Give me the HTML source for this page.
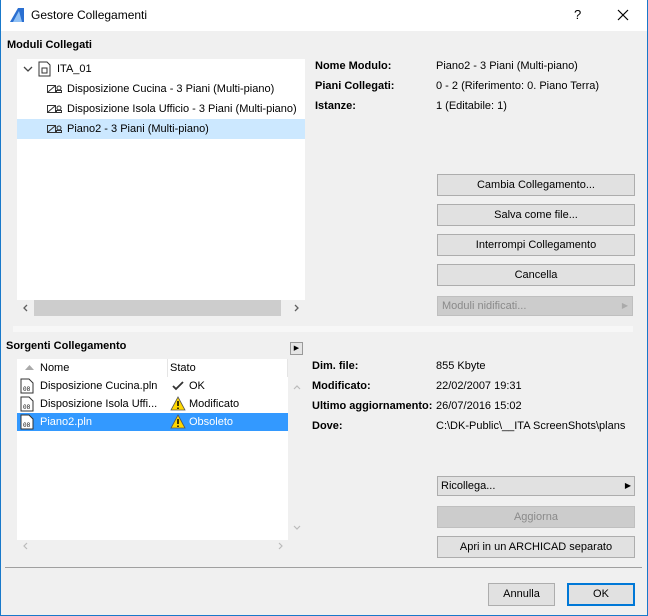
<!DOCTYPE html>
<html><head><meta charset="utf-8"><style>
*{margin:0;padding:0;box-sizing:border-box}
body{width:648px;height:616px;overflow:hidden;background:#f0f0f0;font-family:"Liberation Sans",sans-serif;font-size:11px;color:#000;position:relative}
.a{position:absolute;white-space:nowrap}
.b{font-weight:bold}
.btn{position:absolute;background:#e1e1e1;border:1px solid #adadad;text-align:center;line-height:20px;font-size:11px}
.dis{background:#cccccc;border-color:#bfbfbf;color:#8a8a8a}
</style></head><body>
<div class="a" style="left:0;top:0;width:648px;height:31px;background:#fff"></div>
<div class="a" style="left:0;top:0;width:1px;height:616px;background:#1979ca"></div>
<div class="a" style="right:0;top:0;width:1px;height:616px;background:#1979ca"></div>
<div class="a" style="left:0;bottom:0;width:648px;height:1px;background:#1979ca"></div>
<svg class="a" style="left:9px;top:7px" width="16" height="16"><path d="M1 15 L9 1 L15 1 L15 15 Z" fill="#2a6fd1"/><path d="M4 15 L10 4 L13 15 Z" fill="#8fc0f5"/></svg>
<div class="a" style="left:31px;top:8px;font-size:12px">Gestore Collegamenti</div>
<div class="a" style="left:574px;top:7px;font-size:13px">?</div>
<svg class="a" style="left:617px;top:9px" width="12" height="12"><path d="M1 1L11 11M11 1L1 11" stroke="#000" stroke-width="1.2"/></svg>

<div class="a b" style="left:7px;top:39px">Moduli Collegati</div>
<div class="a" style="left:17px;top:59px;width:288px;height:241px;background:#fff"></div>
<svg class="a" style="left:23px;top:65px" width="10" height="8"><path d="M1 2L5 6L9 2" stroke="#444" fill="none" stroke-width="1.3"/></svg>
<svg class="a" style="left:38px;top:61px" width="13" height="16"><path d="M1 1H9L12 4V15H1Z" stroke="#333" fill="#fff"/><rect x="4" y="7" width="5" height="5" stroke="#333" fill="none"/></svg>
<div class="a" style="left:57px;top:63px">ITA_01</div>
<div class="a" style="left:17px;top:119px;width:288px;height:20px;background:#cce8ff"></div>
<svg class="a" style="left:47px;top:84px" width="16" height="10"><rect x="0.5" y="1.5" width="8" height="7" fill="none" stroke="#333"/><path d="M1 8L8 2" stroke="#333"/><circle cx="12" cy="4" r="2" fill="none" stroke="#333"/><rect x="9.5" y="6.5" width="5" height="2" fill="none" stroke="#333"/></svg>
<svg class="a" style="left:47px;top:104px" width="16" height="10"><rect x="0.5" y="1.5" width="8" height="7" fill="none" stroke="#333"/><path d="M1 8L8 2" stroke="#333"/><circle cx="12" cy="4" r="2" fill="none" stroke="#333"/><rect x="9.5" y="6.5" width="5" height="2" fill="none" stroke="#333"/></svg>
<svg class="a" style="left:47px;top:124px" width="16" height="10"><rect x="0.5" y="1.5" width="8" height="7" fill="none" stroke="#333"/><path d="M1 8L8 2" stroke="#333"/><circle cx="12" cy="4" r="2" fill="none" stroke="#333"/><rect x="9.5" y="6.5" width="5" height="2" fill="none" stroke="#333"/></svg>
<div class="a" style="left:67px;top:83px">Disposizione Cucina - 3 Piani (Multi-piano)</div>
<div class="a" style="left:67px;top:103px;width:238px;overflow:hidden">Disposizione Isola Ufficio - 3 Piani (Multi-piano)</div>
<div class="a" style="left:67px;top:123px">Piano2 - 3 Piani (Multi-piano)</div>
<div class="a" style="left:17px;top:300px;width:288px;height:16px;background:#f0f0f0"></div>
<div class="a" style="left:34px;top:300px;width:247px;height:16px;background:#cdcdcd"></div>
<svg class="a" style="left:22px;top:304px" width="6" height="8"><path d="M5 1L2 4L5 7" stroke="#606060" fill="none" stroke-width="1.3"/></svg>
<svg class="a" style="left:294px;top:304px" width="6" height="8"><path d="M1 1L4 4L1 7" stroke="#606060" fill="none" stroke-width="1.3"/></svg>

<div class="a b" style="left:315px;top:60px">Nome Modulo:</div>
<div class="a b" style="left:315px;top:80px">Piani Collegati:</div>
<div class="a b" style="left:315px;top:100px">Istanze:</div>
<div class="a" style="left:436px;top:60px">Piano2 - 3 Piani (Multi-piano)</div>
<div class="a" style="left:436px;top:80px">0 - 2 (Riferimento: 0. Piano Terra)</div>
<div class="a" style="left:436px;top:100px">1 (Editabile: 1)</div>

<div class="btn" style="left:437px;top:174px;width:198px;height:22px">Cambia Collegamento...</div>
<div class="btn" style="left:437px;top:204px;width:198px;height:22px">Salva come file...</div>
<div class="btn" style="left:437px;top:234px;width:198px;height:22px">Interrompi Collegamento</div>
<div class="btn" style="left:437px;top:264px;width:198px;height:22px">Cancella</div>
<div class="btn dis" style="left:437px;top:296px;width:196px;height:20px;text-align:left;padding-left:4px;line-height:18px">Moduli nidificati...<span style="position:absolute;right:4px;font-size:8px;color:#aaa">▶</span></div>

<div class="a" style="left:13px;top:326px;width:620px;height:6px;background:#f7f7f7"></div>

<div class="a b" style="left:6px;top:340px">Sorgenti Collegamento</div>
<div class="a" style="left:290px;top:342px;width:13px;height:13px;border:1px solid #999;background:#e5e5e5;font-size:7px;line-height:11px;text-align:center">▶</div>
<div class="a" style="left:17px;top:359px;width:271px;height:181px;background:#fff"></div>
<div class="a" style="left:167px;top:359px;width:1px;height:18px;background:#e5e5e5"></div>
<div class="a" style="left:287px;top:359px;width:1px;height:18px;background:#e5e5e5"></div>
<svg class="a" style="left:25px;top:365px" width="9" height="6"><path d="M0 5L4.5 0L9 5Z" fill="#aaa"/></svg>
<div class="a" style="left:40px;top:362px">Nome</div>
<div class="a" style="left:170px;top:362px">Stato</div>
<div class="a" style="left:17px;top:413px;width:271px;height:18px;background:#3399ff"></div>
<svg class="a" style="left:20px;top:378px" width="14" height="16"><path d="M1 1H9L13 5V15H1Z" stroke="#333" fill="#fff"/><text x="3" y="13" font-size="6" font-family="Liberation Mono">08</text></svg>
<svg class="a" style="left:20px;top:396px" width="14" height="16"><path d="M1 1H9L13 5V15H1Z" stroke="#333" fill="#fff"/><text x="3" y="13" font-size="6" font-family="Liberation Mono">08</text></svg>
<svg class="a" style="left:20px;top:414px" width="14" height="16"><path d="M1 1H9L13 5V15H1Z" stroke="#333" fill="#fff"/><text x="3" y="13" font-size="6" font-family="Liberation Mono">08</text></svg>
<div class="a" style="left:40px;top:380px">Disposizione Cucina.pln</div>
<div class="a" style="left:40px;top:398px">Disposizione Isola Uffi...</div>
<div class="a" style="left:40px;top:416px;color:#fff">Piano2.pln</div>
<svg class="a" style="left:172px;top:381px" width="12" height="10"><path d="M1 5L4 8L11 1" stroke="#333" fill="none" stroke-width="1.8"/></svg>
<svg class="a" style="left:170px;top:396px" width="16" height="15"><path d="M8 1L15 14H1Z" fill="#ffd800" stroke="#555" stroke-width="0.8"/><path d="M8 5V10M8 11.5V13" stroke="#000" stroke-width="1.5"/></svg>
<svg class="a" style="left:170px;top:414px" width="16" height="15"><path d="M8 1L15 14H1Z" fill="#ffd800" stroke="#555" stroke-width="0.8"/><path d="M8 5V10M8 11.5V13" stroke="#000" stroke-width="1.5"/></svg>
<div class="a" style="left:189px;top:380px">OK</div>
<div class="a" style="left:189px;top:398px">Modificato</div>
<div class="a" style="left:189px;top:416px;color:#fff">Obsoleto</div>
<svg class="a" style="left:293px;top:385px" width="8" height="5"><path d="M1 4L4 1L7 4" stroke="#bbb" fill="none" stroke-width="1.2"/></svg>
<svg class="a" style="left:293px;top:525px" width="8" height="5"><path d="M1 1L4 4L7 1" stroke="#bbb" fill="none" stroke-width="1.2"/></svg>
<svg class="a" style="left:22px;top:542px" width="6" height="8"><path d="M5 1L2 4L5 7" stroke="#bbb" fill="none" stroke-width="1.2"/></svg>
<svg class="a" style="left:278px;top:542px" width="6" height="8"><path d="M1 1L4 4L1 7" stroke="#bbb" fill="none" stroke-width="1.2"/></svg>

<div class="a b" style="left:312px;top:360px">Dim. file:</div>
<div class="a b" style="left:312px;top:380px">Modificato:</div>
<div class="a b" style="left:312px;top:400px">Ultimo aggiornamento:</div>
<div class="a b" style="left:312px;top:420px">Dove:</div>
<div class="a" style="left:436px;top:360px">855 Kbyte</div>
<div class="a" style="left:436px;top:380px">22/02/2007 19:31</div>
<div class="a" style="left:436px;top:400px">26/07/2016 15:02</div>
<div class="a" style="left:436px;top:420px">C:\DK-Public\__ITA ScreenShots\plans</div>

<div class="btn" style="left:437px;top:476px;width:198px;height:20px;text-align:left;padding-left:3px;line-height:18px">Ricollega...<span style="position:absolute;right:3px;font-size:8px">▶</span></div>
<div class="btn dis" style="left:437px;top:506px;width:198px;height:22px">Aggiorna</div>
<div class="btn" style="left:437px;top:536px;width:198px;height:22px">Apri in un ARCHICAD separato</div>

<div class="a" style="left:5px;top:567px;width:637px;height:1px;background:#a0a0a0"></div>
<div class="btn" style="left:488px;top:583px;width:67px;height:23px;line-height:21px">Annulla</div>
<div class="btn" style="left:567px;top:583px;width:68px;height:23px;line-height:19px;border:2px solid #0078d7">OK</div>
</body></html>
